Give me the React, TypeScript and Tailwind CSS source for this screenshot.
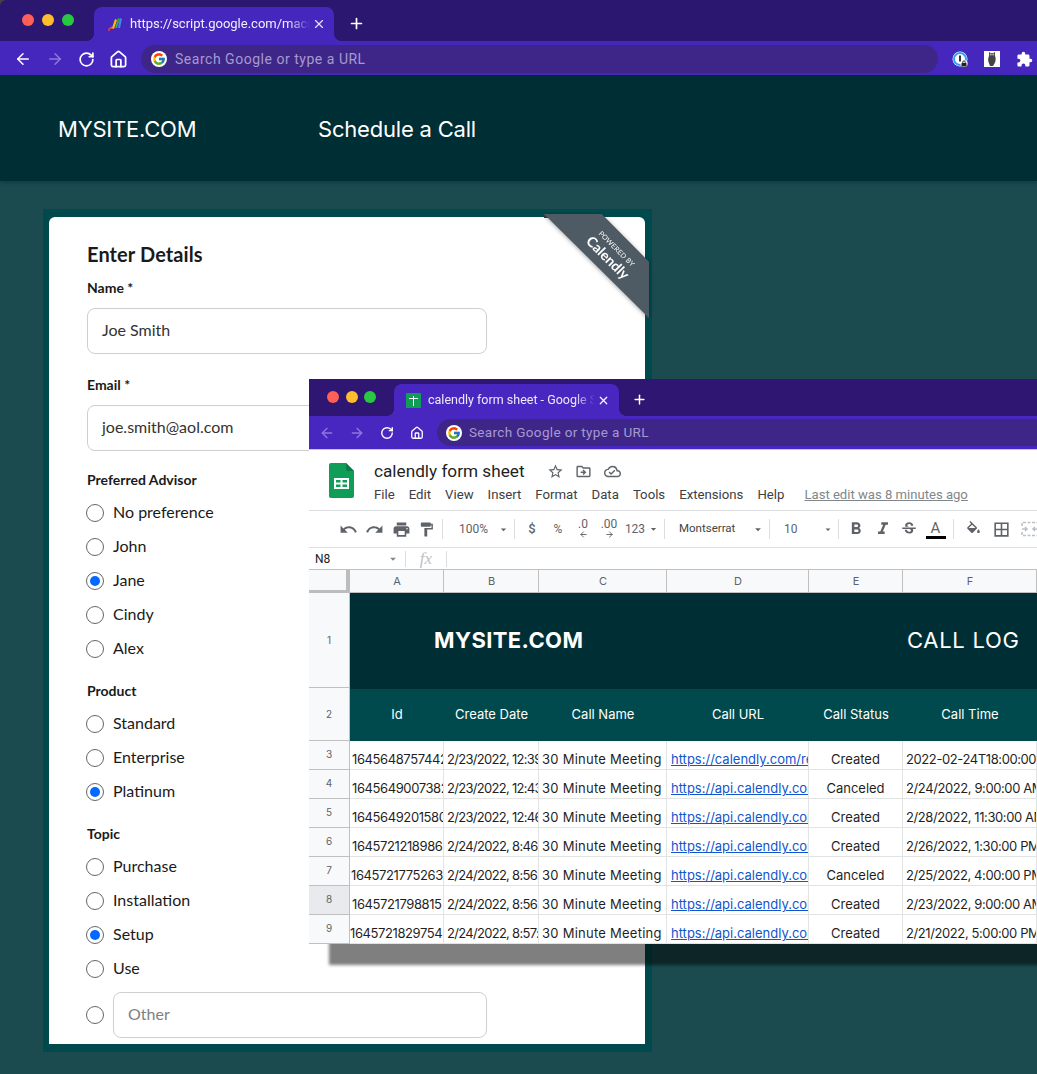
import type { ReactNode } from 'react';
import { ArrowLeft, ArrowRight, RotateCw, Home, Plus, X } from 'lucide-react';
import { FcGoogle } from 'react-icons/fc';
import {
  MdUndo, MdRedo, MdPrint, MdFormatPaint, MdFormatBold, MdFormatItalic, MdStrikethroughS,
  MdBorderAll, MdExtension, MdStarBorder, MdOutlineDriveFileMove, MdOutlineCloudDone,
  MdArrowDropDown,
} from 'react-icons/md';

const SHEET_FONT = "font-['Inter','Liberation_Sans',sans-serif]";

// --- browser chrome ---
const TrafficLights = ({ className }: { className: string }) => (
  <div className={`flex items-center ${className}`}>
    <span className="size-[12px] rounded-full bg-[#ff5f57]" />
    <span className="size-[12px] rounded-full bg-[#febc2e]" />
    <span className="size-[12px] rounded-full bg-[#28c840]" />
  </div>
);

const ScriptLogo = () => (
  <svg width="16" height="16" viewBox="0 0 16 16" className="shrink-0">
    <path d="M1 13l4-3 1 3z" fill="#ea4335" />
    <path d="M5 12l3-9 2 1-3 9z" fill="#fbbc04" />
    <path d="M8 12l3-10 2 1-3 9z" fill="#34a853" />
    <path d="M11 12l2-10 2 1-2 9z" fill="#4285f4" />
    <circle cx="2" cy="14" r="1" fill="#ea4335" />
  </svg>
);

const SheetsTabIcon = () => (
  <div className="relative size-[15px] shrink-0 rounded-[1px] bg-[#0f9d58]">
    <span className="absolute left-[7px] top-[3px] h-[10px] w-px bg-white" />
    <span className="absolute left-[3px] top-[5px] h-px w-[9px] bg-white" />
  </div>
);

const OnePasswordIcon = () => (
  <svg width="16" height="16" viewBox="0 0 16 16">
    <circle cx="8" cy="8" r="7.5" fill="#fff" />
    <circle cx="8" cy="8" r="6" fill="none" stroke="#3b9cf5" strokeWidth="2" />
    <rect x="7" y="4.5" width="2" height="6" fill="#333" />
    <circle cx="12" cy="12.5" r="3.6" fill="#fff" />
    <rect x="9.5" y="12" width="5" height="3.6" rx=".5" fill="#222" />
    <path d="M10.8 12v-1a1.2 1.2 0 0 1 2.4 0v1" fill="none" stroke="#222" strokeWidth=".9" />
  </svg>
);

const OwlIcon = () => (
  <svg width="16" height="16" viewBox="0 0 16 16">
    <rect width="16" height="16" fill="#fff" />
    <path d="M5 1l1.5 1h3L11 1v4c1 2 1 5-.5 7.500L9 15H6l-1.500-4C4 9 4 7 5 5z" fill="#444" />
    <circle cx="6.800" cy="3.600" r="1" fill="#bbb" />
    <circle cx="9.200" cy="3.600" r="1" fill="#bbb" />
  </svg>
);

// --- main page form ---
const Radio = ({ checked }: { checked?: boolean }) => (
  <span className="flex size-[18px] shrink-0 items-center justify-center rounded-full border border-[#666] bg-white">
    {checked && <span className="size-[10px] rounded-full bg-[#0069ff]" />}
  </span>
);

const RadioGroup = ({ label, options, selected, className }: { label: string; options: string[]; selected?: string; className: string }) => (
  <div className={className}>
    <div className="h-4 text-[14px] font-bold leading-4 text-[#1a1a1a]">{label}</div>
    <div className="mt-2 -ml-px">
      {options.map((opt) => (
        <div key={opt} className="flex h-[34px] items-center gap-[9px] text-[16px] text-[#1a1a1a]">
          <Radio checked={opt === selected} />
          <span className="pb-[2px]">{opt}</span>
        </div>
      ))}
    </div>
  </div>
);

const TextBox = ({ value, muted, className }: { value: string; muted?: boolean; className: string }) => (
  <div className={`flex h-[46px] items-center rounded-lg border border-[#cfcfcf] px-[14px] pb-[3px] text-[16px] ${muted ? 'text-[#808080]' : 'text-[#333]'} ${className}`}>
    {value}
  </div>
);

// --- sheet toolbar ---
const ToolSep = () => <span className="mx-[4px] h-[20px] w-px shrink-0 bg-[#dadce0]" />;

const Tool = ({ w, children, className = '' }: { w: string; children: ReactNode; className?: string }) => (
  <span className={`flex shrink-0 items-center justify-center text-[#5f6368] ${w} ${className}`}>{children}</span>
);

const FillIcon = () => (
  <svg width="17" height="17" viewBox="0 0 24 24" fill="currentColor">
    <path d="M16.56 8.94L7.62 0 6.21 1.41l2.38 2.38-5.15 5.15c-.59.59-.59 1.54 0 2.12l5.5 5.5c.29.29.68.44 1.06.44s.77-.15 1.06-.44l5.5-5.5c.59-.58.59-1.53 0-2.12zM5.21 10L10 5.21 14.79 10H5.21zM19 11.500s-2 2.170-2 3.500c0 1.100.9 2 2 2s2-.9 2-2c0-1.330-2-3.500-2-3.500z" />
  </svg>
);

const MergeIcon = () => (
  <svg width="18" height="16" viewBox="0 0 18 16" fill="none" stroke="#bdc1c6" strokeWidth="1.6">
    <path d="M1 5V1.500h16V5M1 11v3.500h16V11" strokeDasharray="3 1.500" />
    <path d="M1 8h5M4 6l2 2-2 2M17 8h-5M14 6l-2 2 2 2" />
  </svg>
);

const rows = [
  { n: 3, id: '1645648757442', date: '2/23/2022, 12:39:11 PM', url: 'https://calendly.com/reschedulings/x', status: 'Created', time: '2022-02-24T18:00:00.000Z', pad: 'pl-[2px]' },
  { n: 4, id: '1645649007382', date: '2/23/2022, 12:43:27 PM', url: 'https://api.calendly.com/scheduled', status: 'Canceled', time: '2/24/2022, 9:00:00 AM', pad: 'pl-[2px]' },
  { n: 5, id: '1645649201580', date: '2/23/2022, 12:46:41 PM', url: 'https://api.calendly.com/scheduled', status: 'Created', time: '2/28/2022, 11:30:00 AM', pad: 'pl-[2px]' },
  { n: 6, id: '1645721218986', date: '2/24/2022, 8:46:58 AM', url: 'https://api.calendly.com/scheduled', status: 'Created', time: '2/26/2022, 1:30:00 PM', pad: 'pl-[2px]' },
  { n: 7, id: '1645721775263', date: '2/24/2022, 8:56:15 AM', url: 'https://api.calendly.com/scheduled', status: 'Canceled', time: '2/25/2022, 4:00:00 PM', pad: 'pl-px' },
  { n: 8, id: '1645721798815', date: '2/24/2022, 8:56:38 AM', url: 'https://api.calendly.com/scheduled', status: 'Created', time: '2/23/2022, 9:00:00 AM', pad: 'pl-[2px]' },
  { n: 9, id: '1645721829754', date: '2/24/2022, 8:57:09 AM', url: 'https://api.calendly.com/scheduled', status: 'Created', time: '2/21/2022, 5:00:00 PM', pad: 'pl-0' },
];

const cell = 'overflow-hidden whitespace-nowrap border-b border-r border-[#e2e3e3] bg-white flex items-end pb-[2px] text-[13px] leading-4 text-[#1f1f1f]';
const digits = 'text-[12.5px] tracking-[-0.4px]';
const colHead = 'flex items-center justify-center pl-px border-r border-b border-[#c0c0c0] bg-[#f8f9fa] text-[11px] text-[#5f6368]';
const headCell = 'flex items-center justify-center bg-[#004a4d] text-[13px] text-white border-t border-[#002e35]';
const rowHead = 'flex justify-center pt-[6px] border-b border-r border-[#c0c0c0] text-[10px] text-[#5f6368]';

const SheetWindow = () => (
  <div className={`absolute left-[309px] top-[379px] h-[565px] w-[728px] bg-white shadow-[20px_21px_3px_rgba(0,0,0,0.5)] ${SHEET_FONT}`}>
    {/* tab strip */}
    <div className="flex h-[37px] items-end bg-[#2e1672]">
      <TrafficLights className="mb-[13px] ml-[18px] w-[49px] justify-between shrink-0" />
      <div className="relative ml-[18px] flex h-[32px] w-[225px] items-center rounded-t-[8px] bg-[#4827c0] pl-[12px] before:absolute before:-left-2 before:bottom-0 before:size-2 before:bg-[radial-gradient(circle_at_0_0,transparent_8px,#4827c0_8px)] after:absolute after:-right-2 after:bottom-0 after:size-2 after:bg-[radial-gradient(circle_at_100%_0,transparent_8px,#4827c0_8px)]">
        <SheetsTabIcon />
        <span className="ml-[7px] w-[167px] overflow-hidden whitespace-nowrap text-[12.5px] text-[#ece9fb] [mask-image:linear-gradient(to_right,black_88%,transparent)] font-['Roboto',sans-serif]">
          calendly form sheet - Google Sheets
        </span>
        <X className="ml-[2px] size-[13px] text-white" strokeWidth={2.2} />
      </div>
      <Plus className="mb-[9px] ml-[13px] size-[15px] text-white" strokeWidth={2.4} />
    </div>
    {/* toolbar */}
    <div className="flex h-[34px] items-center border-b border-[#c9bdf5] bg-[#4827c0] pl-[10px]">
      <ArrowLeft className="size-[16px] text-[#8d78dc]" strokeWidth={2} />
      <ArrowRight className="ml-[14px] size-[16px] text-[#8d78dc]" strokeWidth={2} />
      <RotateCw className="ml-[15px] size-[14px] text-white" strokeWidth={2.4} />
      <Home className="ml-[16px] size-[14px] text-white" strokeWidth={2.2} />
      <div className="ml-[13px] flex h-[27px] flex-1 items-center rounded-l-full bg-[#3e2688] pl-[9px]">
        <span className="flex size-[16px] items-center justify-center rounded-full bg-white">
          <FcGoogle className="size-[14px]" />
        </span>
        <span className="ml-[7px] font-['Roboto',sans-serif] text-[13.5px] tracking-[0.35px] text-[#a59ad0]">Search Google or type a URL</span>
      </div>
    </div>
    {/* doc header */}
    <div className="flex h-[61px] items-start border-b border-[#dadce0] pl-[20px] pt-[13px]">
      <svg width="25" height="35" viewBox="0 0 25 35" className="shrink-0">
        <path d="M2 0h15l8 8v25a2 2 0 0 1-2 2H2a2 2 0 0 1-2-2V2a2 2 0 0 1 2-2z" fill="#0f9d58" />
        <path d="M17 0l8 8h-6a2 2 0 0 1-2-2z" fill="#0b7c45" />
        <path d="M5 15h15v11H5z" fill="#fff" />
        <path d="M7 17h4.500v2.500H7zM13.500 17H18v2.500h-4.500zM7 21.500h4.500V24H7zM13.500 21.500H18V24h-4.500z" fill="#0f9d58" />
      </svg>
      <div className="ml-[20px] -mt-[2px] font-['Roboto',sans-serif]">
        <div className="flex h-[20px] items-center">
          <span className="w-[150px] whitespace-nowrap text-[17.2px] leading-5 text-[#1f1f1f]">calendly form sheet</span>
          <MdStarBorder className="ml-[23px] size-[17px] text-[#5f6368]" />
          <MdOutlineDriveFileMove className="ml-[11px] size-[17px] text-[#5f6368]" />
          <MdOutlineCloudDone className="ml-[12px] size-[17px] text-[#5f6368]" />
        </div>
        <div className="mt-[5px] flex h-[17px] items-center gap-[14px] whitespace-nowrap text-[13.2px] text-[#3c4043]">
          <span>File</span>
          <span>Edit</span>
          <span>View</span>
          <span>Insert</span>
          <span>Format</span>
          <span>Data</span>
          <span>Tools</span>
          <span>Extensions</span>
          <span>Help</span>
          <span className="ml-[6px] text-[13.1px] text-[#80868b] underline">Last edit was 8 minutes ago</span>
        </div>
      </div>
    </div>
    {/* format toolbar */}
    <div className="flex h-[37px] items-center border-b border-[#e0e0e0] pl-[26px] font-['Roboto',sans-serif] text-[12px]">
      <Tool w="w-[26px]"><MdUndo className="size-[19px]" /></Tool>
      <Tool w="w-[27px]"><MdRedo className="size-[19px]" /></Tool>
      <Tool w="w-[26px]"><MdPrint className="size-[19px]" /></Tool>
      <Tool w="w-[24px]"><MdFormatPaint className="size-[17px]" /></Tool>
      <ToolSep />
      <Tool w="w-[50px]" className="justify-start pl-[12px]">100%</Tool>
      <Tool w="w-[13px]"><MdArrowDropDown className="size-[17px]" /></Tool>
      <ToolSep />
      <Tool w="w-[26px]" className="text-[13px] font-medium">$</Tool>
      <Tool w="w-[26px]">%</Tool>
      <Tool w="w-[24px]" className="flex-col leading-[11px]">
        <span>.0</span>
        <ArrowLeft className="size-[9px]" strokeWidth={2.5} />
      </Tool>
      <Tool w="w-[28px]" className="flex-col leading-[11px]">
        <span>.00</span>
        <ArrowRight className="size-[9px]" strokeWidth={2.5} />
      </Tool>
      <Tool w="w-[24px]">123</Tool>
      <Tool w="w-[13px]"><MdArrowDropDown className="size-[16px]" /></Tool>
      <ToolSep />
      <Tool w="w-[82px]" className="justify-start pl-[10px] text-[11.5px] text-[#444]">Montserrat</Tool>
      <Tool w="w-[14px]"><MdArrowDropDown className="size-[17px]" /></Tool>
      <ToolSep />
      <Tool w="w-[48px]" className="justify-start pl-[10px]">10</Tool>
      <Tool w="w-[12px]"><MdArrowDropDown className="size-[17px]" /></Tool>
      <ToolSep />
      <Tool w="w-[26px]"><MdFormatBold className="size-[20px]" /></Tool>
      <Tool w="w-[27px]"><MdFormatItalic className="size-[20px]" /></Tool>
      <Tool w="w-[26px]"><MdStrikethroughS className="size-[18px]" /></Tool>
      <Tool w="w-[27px]" className="flex-col text-[15px] leading-4">
        <span>A</span>
        <span className="h-[3px] w-[20px] bg-black" />
      </Tool>
      <ToolSep />
      <Tool w="w-[30px]"><FillIcon /></Tool>
      <Tool w="w-[27px]"><MdBorderAll className="size-[19px]" /></Tool>
      <Tool w="w-[30px]"><MergeIcon /></Tool>
    </div>
    {/* formula bar */}
    <div className="flex h-[22px] items-center border-b border-[#c0c0c0] font-['Roboto',sans-serif]">
      <span className="w-[80px] pl-[6px] text-[12px] text-[#222]">N8</span>
      <MdArrowDropDown className="-ml-[3px] size-[14px] text-[#80868b]" />
      <span className="ml-[5px] h-[16px] w-px bg-[#dadce0]" />
      <span className="w-[40px] text-center font-['Liberation_Serif',serif] text-[17px] italic leading-none text-[#bdc1c6]">fx</span>
      <span className="h-[16px] w-px bg-[#dadce0]" />
    </div>
    {/* grid */}
    <div className="grid grid-cols-[41px_94px_95px_128px_142px_94px_134px] grid-rows-[23px_95px_53px_repeat(7,29px)]">
      <div className="border-b-[3px] border-r-[4px] border-[#bdbdbd] bg-[#f8f9fa]" />
      {['A', 'B', 'C', 'D', 'E', 'F'].map((c) => (
        <div key={c} className={colHead}>{c}</div>
      ))}

      <div className={`${rowHead} items-center !pt-0 bg-[#f8f9fa]`}>1</div>
      <div className="col-span-6 flex items-center overflow-hidden whitespace-nowrap bg-[#002e35] pl-[84px] text-white">
        <span className="w-[473px] text-[22px] font-bold tracking-[0.4px]">MYSITE.COM</span>
        <span className="text-[22px] tracking-[0.7px]">CALL LOG</span>
      </div>

      <div className={`${rowHead} items-center !pt-0 bg-[#f8f9fa]`}>2</div>
      {['Id', 'Create Date', 'Call Name', 'Call URL', 'Call Status', 'Call Time'].map((h) => (
        <div key={h} className={headCell}>{h}</div>
      ))}

      {rows.map((r) => (
        <div key={r.n} className="contents">
          <div className={`${rowHead} ${r.n === 8 ? 'bg-[#e8eaed]' : 'bg-[#f8f9fa]'}`}>{r.n}</div>
          <div className={`${cell} ${digits} ${r.pad}`}>{r.id}</div>
          <div className={`${cell} text-[12.5px] tracking-[-0.7px] pl-[3px]`}>{r.date}</div>
          <div className={`${cell} pl-[3px] tracking-[0.25px]`}>30 Minute Meeting</div>
          <div className={`${cell} pl-[4px] text-[12.8px] text-[#1155cc]`}><span className="underline">{r.url}</span></div>
          <div className={`${cell} justify-center`}>{r.status}</div>
          <div className={`${cell} ${digits} pl-[3px]`}>{r.time}</div>
        </div>
      ))}
    </div>
  </div>
);

export default function App() {
  return (
    <div className="relative h-[1074px] w-[1037px] overflow-hidden bg-[#1b4b4f]">
      {/* main browser chrome */}
      <div className="bg-[#444]">
        <div className="flex h-[41px] items-end rounded-tl-[6px] bg-[#2b1770]">
          <TrafficLights className="mb-[15px] ml-[22px] w-[52px] justify-between shrink-0" />
          <div className="relative ml-[20px] flex h-[34px] w-[240px] items-center rounded-t-[8px] bg-[#4627bd] pl-[13px] before:absolute before:-left-2 before:bottom-0 before:size-2 before:bg-[radial-gradient(circle_at_0_0,transparent_8px,#4627bd_8px)] after:absolute after:-right-2 after:bottom-0 after:size-2 after:bg-[radial-gradient(circle_at_100%_0,transparent_8px,#4627bd_8px)]">
            <ScriptLogo />
            <span className="ml-[7px] w-[180px] overflow-hidden whitespace-nowrap font-['Roboto',sans-serif] text-[13px] text-[#f1effb] [mask-image:linear-gradient(to_right,black_88%,transparent)]">
              https://script.google.com/macros/s/
            </span>
            <X className="ml-[2px] size-[14px] text-[#e8e4f8]" strokeWidth={2} />
          </div>
          <Plus className="mb-[9px] ml-[14px] size-[17px] text-white" strokeWidth={2.4} />
        </div>
      </div>
      <div className="flex h-[34px] items-center bg-[#4627bd] pl-[14px] pt-[2px]">
        <ArrowLeft className="size-[18px] text-white" strokeWidth={2} />
        <ArrowRight className="ml-[14px] size-[18px] text-[#8d78dc]" strokeWidth={2} />
        <RotateCw className="ml-[14px] size-[17px] text-white" strokeWidth={2.4} />
        <Home className="ml-[14px] size-[19px] text-white" strokeWidth={2.2} />
        <div className="ml-[13px] flex h-[28px] w-[797px] items-center rounded-full bg-[#3e2688] pl-[10px]">
          <span className="flex size-[16px] items-center justify-center rounded-full bg-white">
            <FcGoogle className="size-[14px]" />
          </span>
          <span className="ml-[8px] font-['Roboto',sans-serif] text-[14px] tracking-[0.52px] text-[#a59ad0]">Search Google or type a URL</span>
        </div>
        <div className="ml-[14px] flex items-center gap-4">
          <OnePasswordIcon />
          <OwlIcon />
          <MdExtension className="size-[17px] text-white" />
        </div>
      </div>

      {/* site header */}
      <div className="flex h-[106px] items-center bg-[#002e35] pl-[58px] pt-[2px] font-['Inter',sans-serif] text-[22px] text-white shadow-[0_2px_4px_rgba(0,0,0,0.2)]">
        <span className="w-[260px] tracking-[-0.2px]">MYSITE.COM</span>
        <span className="tracking-[-0.2px]">Schedule a Call</span>
      </div>

      {/* form panel */}
      <div className="relative ml-[43px] mt-[28px] w-[609px] border-y-[8px] border-l-[6px] border-r-[7px] border-[#004a4d] bg-[#004a4d]">
        <div className="overflow-hidden rounded-t-[6px] bg-white pb-[6px] pl-[38px] pt-[25px] font-['Lato',sans-serif]">
          <h1 className="h-[24px] text-[20px] font-bold leading-6 tracking-[0.1px] text-[#1a1a1a]">Enter Details</h1>
          <div className="mt-[14px] h-4 text-[14px] font-bold leading-4 text-[#1a1a1a]">Name *</div>
          <TextBox value="Joe Smith" className="mt-[12px] w-[400px]" />
          <div className="mt-[23px] h-4 text-[14px] font-bold leading-4 text-[#1a1a1a]">Email *</div>
          <TextBox value="joe.smith@aol.com" className="mt-[12px] w-[400px]" />
          <RadioGroup className="mt-[21px]" label="Preferred Advisor" options={['No preference', 'John', 'Jane', 'Cindy', 'Alex']} selected="Jane" />
          <RadioGroup className="mt-[17px]" label="Product" options={['Standard', 'Enterprise', 'Platinum']} selected="Platinum" />
          <RadioGroup className="mt-[17px]" label="Topic" options={['Purchase', 'Installation', 'Setup', 'Use']} selected="Setup" />
          <div className="mt-[6px] -ml-px flex items-center gap-[9px]">
            <Radio />
            <TextBox value="Other" muted className="w-[374px]" />
          </div>
        </div>

        {/* calendly ribbon */}
        <span className="absolute -top-[3px] left-[495px] h-[4px] w-[6px] bg-[#37424a]" />
        <span className="absolute left-[596px] top-[97px] h-[4px] w-[4px] bg-[#37424a]" />
        <div className="absolute -top-[3px] left-[495px] h-[104px] w-[105px] drop-shadow-[0_1px_2px_rgba(0,0,0,0.35)]">
          <div className="relative h-full w-full bg-[#4f5b64] [clip-path:polygon(0_0,55%_0,100%_46%,100%_100%)]">
            <div className="absolute left-[27px] top-[29px] w-[80px] rotate-45 text-center font-['Lato',sans-serif] leading-none text-white">
              <div className="text-[7px] tracking-[0.2px]">POWERED BY</div>
              <div className="mt-[2px] text-[14px] font-bold">Calendly</div>
            </div>
          </div>
        </div>
      </div>

      <SheetWindow />
    </div>
  );
}
